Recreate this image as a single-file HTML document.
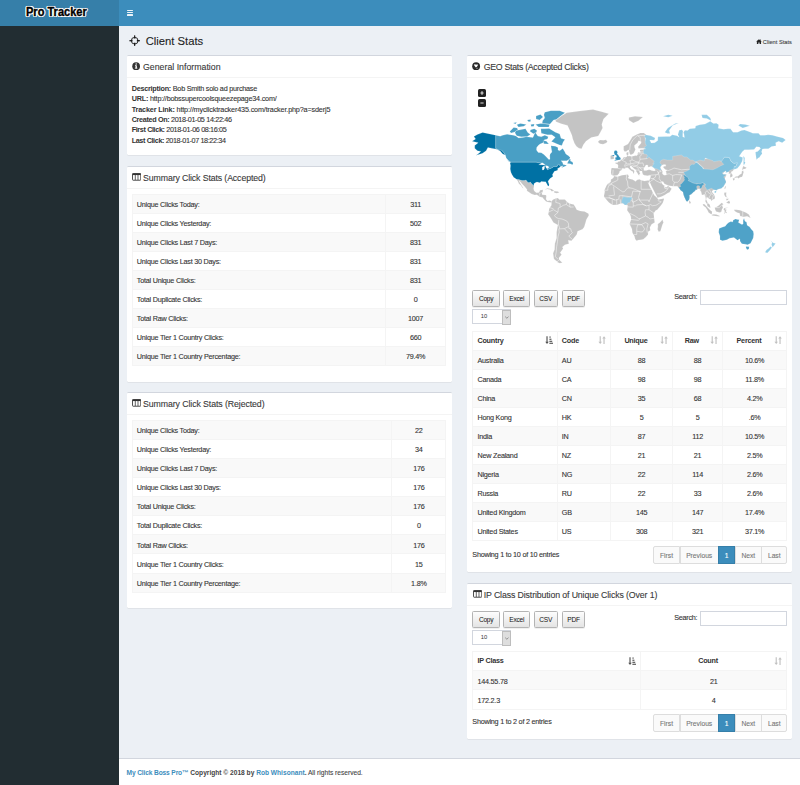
<!DOCTYPE html>
<html><head><meta charset="utf-8"><title>Client Stats</title>
<style>
html,body{margin:0;padding:0;}
body{width:800px;height:785px;overflow:hidden;background:#ecf0f5;}
#pg{zoom:0.5165;position:relative;width:1549px;height:1520px;overflow:hidden;background:#ecf0f5;font-family:"Liberation Sans",sans-serif;color:#333;font-size:13px;line-height:20px;}
.abs{position:absolute;}
.hdr{left:0;top:0;width:1549px;height:50px;background:#3c8dbc;}
.logo{left:0;top:0;width:230px;height:50px;background:#367fa9;}
.logo span{position:absolute;left:50px;top:10px;font-weight:bold;font-size:23.5px;line-height:30px;color:#000;-webkit-text-stroke:0.7px #000;transform:scaleX(0.91);transform-origin:0 0;white-space:nowrap;
 text-shadow:-2px -2px 0 #fff,2px -2px 0 #fff,-2px 2px 0 #fff,2px 2px 0 #fff,0 -2.6px 0 #fff,0 2.6px 0 #fff,-2.6px 0 0 #fff,2.6px 0 0 #fff,0 0 3px #fff;}
.side{left:0;top:50px;width:230px;height:1470px;background:#222d32;}
.ham{left:245px;top:19px;width:12.5px;height:11.5px;}
.ham i{position:absolute;left:0;width:12.5px;height:2.2px;background:rgba(255,255,255,0.9);border-radius:1px;}
.ch-title{left:282px;top:66px;font-size:21.8px;line-height:30px;color:#222;white-space:nowrap;}
.ch-icon{left:249px;top:67px;width:22px;height:22px;}
.bc{left:1463px;top:75px;font-size:11px;line-height:15px;color:#444;white-space:nowrap;}
.box{background:#fff;border-top:3px solid #d2d6de;border-radius:3px;box-shadow:0 1px 1px rgba(0,0,0,.1);box-sizing:border-box;}
.bh{position:absolute;left:0;top:0;right:0;height:41px;border-bottom:1px solid #f4f4f4;}
.bh .t{position:absolute;left:32px;top:9.5px;font-size:17px;line-height:24px;color:#383838;white-space:nowrap;}
.bh svg{position:absolute;left:10px;top:12px;}
.bb{position:absolute;left:10px;right:10px;}
table.tb{border-collapse:collapse;width:609.5px;table-layout:fixed;}
table.tb td,table.tb th{border:1px solid #f4f4f4;padding:7.5px 8px;line-height:20px;height:20px;font-size:14px;letter-spacing:-0.45px;white-space:nowrap;overflow:hidden;}
table.tb td{padding:10px 8px 5px 8px;}
table.tb tr.o td{background:#f9f9f9;}
table.tb th{font-weight:bold;text-align:left;position:relative;}
table.tb .c,.c{text-align:center;}
.btn{position:absolute;top:-0.5px;height:33px;box-sizing:border-box;border:1px solid #b4b4b4;border-radius:3px;background:linear-gradient(#fdfdfd,#e4e4e4);font-size:12.8px;letter-spacing:-0.45px;line-height:31px;text-align:center;color:#111;box-shadow:0 1px 1px rgba(0,0,0,.12);}
.sel{position:absolute;left:0;width:75px;height:29px;box-sizing:border-box;border:1px solid #d2d6de;background:#fff;font-size:11.2px;line-height:27px;}
.sel span{position:absolute;left:14.5px;top:0.5px;}
.sel b{position:absolute;right:-1px;top:-1px;width:17px;height:29px;box-sizing:border-box;background:#dedede;border:1px solid #bdbdbd;}
.srch{position:absolute;font-size:14px;letter-spacing:-0.5px;line-height:20px;color:#333;}
.inp{position:absolute;width:168.5px;height:30px;box-sizing:border-box;border:1px solid #d2d6de;background:#fff;}
.info{position:absolute;left:0;font-size:14px;letter-spacing:-0.45px;line-height:20px;color:#333;white-space:nowrap;}
.pag{position:absolute;height:34px;box-sizing:border-box;}
.pag a{position:absolute;top:0;height:34px;box-sizing:border-box;border:1px solid #ddd;background:#fafafa;color:#777;font-size:13px;line-height:34px;text-align:center;}
.pag a:first-child{border-radius:4px 0 0 4px;}
.pag a:last-child{border-radius:0 4px 4px 0;}
.pag a.act{background:#3c8dbc;border-color:#367fa9;color:#fff;z-index:2;}
.sico{position:absolute;top:11px;}
.foot{left:230px;top:1467.5px;width:1319px;height:53px;background:#fff;border-top:1px solid #d2d6de;box-sizing:border-box;}
.foot .ft{position:absolute;left:15px;top:18px;font-size:12.8px;line-height:20px;color:#444;white-space:nowrap;}
.foot a{color:#3c8dbc;font-weight:bold;text-decoration:none;}
.gi{line-height:20px;font-size:14px;letter-spacing:-0.45px;}
.gi b{font-weight:bold;-webkit-text-stroke:0;}
table.tb td,.gi,.info,.srch,.pag a,.bc,.ch-title,.bh .t,.foot .ft{-webkit-text-stroke:0.2px currentColor;}
.foot b,.foot a{-webkit-text-stroke:0;}
</style></head>
<body><div id="pg">
<div class="abs hdr"></div>
<div class="abs logo"><span>Pro Tracker</span></div>
<div class="abs ham"><i style="top:0"></i><i style="top:4.5px"></i><i style="top:9px"></i></div>
<div class="abs side"></div>

<svg class="abs ch-icon" viewBox="0 0 22 22"><circle cx="11" cy="11" r="6.5" fill="none" stroke="#1a1a1a" stroke-width="1.7"/><path d="M9.4 6.8 L10.1 0.6 L11.9 0.6 L12.6 6.8 Z M9.4 15.2 L10.1 21.4 L11.9 21.4 L12.6 15.2 Z M6.8 9.4 L0.6 10.1 L0.6 11.9 L6.8 12.6 Z M15.2 9.4 L21.4 10.1 L21.4 11.9 L15.2 12.6 Z" fill="#1a1a1a"/></svg>
<div class="abs ch-title">Client Stats</div>
<div class="abs bc"><svg width="11.5" height="10" viewBox="0 0 11.5 10" style="vertical-align:-1px"><path d="M5.75 0.6 L11.3 5 L9.8 5 L9.8 9.8 L6.9 9.8 L6.9 6.6 L4.6 6.6 L4.6 9.8 L1.7 9.8 L1.7 5 L0.2 5 Z M8.2 0.8 H9.6 V3 L8.2 2 Z" fill="#262626"/></svg><span style="margin-left:2.5px">Client Stats</span></div>

<!-- Box 1 General Information -->
<div class="abs box" style="left:245px;top:107px;width:629.5px;height:194px;">
 <div class="bh"><svg width="16" height="16" viewBox="0 0 16 16"><circle cx="8" cy="8" r="7.5" fill="#333"/><rect x="6.8" y="6.5" width="2.6" height="6" fill="#fff"/><rect x="5.6" y="11.2" width="4.8" height="1.4" fill="#fff"/><rect x="5.8" y="6.5" width="2" height="1.3" fill="#fff"/><circle cx="8.1" cy="4" r="1.4" fill="#fff"/></svg><div class="t">General Information</div></div>
 <div class="bb gi" style="top:53.5px;">
  <div style="letter-spacing:-0.45px"><b>Description:</b> Bob Smith solo ad purchase</div>
  <div style="letter-spacing:-0.38px"><b>URL:</b> http://bobssupercoolsqueezepage34.com/</div>
  <div style="letter-spacing:-0.29px"><b>Tracker Link:</b> http://myclicktracker435.com/tracker.php?a=sderj5</div>
  <div style="letter-spacing:-0.65px"><b>Created On:</b> 2018-01-05 14:22:46</div>
  <div style="letter-spacing:-0.71px"><b>First Click:</b> 2018-01-06 08:16:05</div>
  <div style="letter-spacing:-0.73px"><b>Last Click:</b> 2018-01-07 18:22:34</div>
 </div>
</div>

<!-- Box 2 Summary Accepted -->
<div class="abs box" style="left:245px;top:321px;width:629.5px;height:418px;">
 <div class="bh"><svg width="18" height="15" viewBox="0 0 18 15" style="top:12.5px;left:10.5px"><rect x="1" y="1" width="16" height="13" rx="1.2" fill="none" stroke="#333" stroke-width="1.7"/><rect x="1" y="1" width="16" height="3" fill="#333"/><path d="M6.4 3.5V13.5M11.6 3.5V13.5" stroke="#333" stroke-width="1.5"/></svg><div class="t" style="letter-spacing:-0.24px">Summary Click Stats (Accepted)</div></div>
 <div class="bb" style="top:52.3px;">
  <table class="tb"><colgroup><col style="width:489.8px"><col></colgroup>
  <tr class="o"><td>Unique Clicks Today:</td><td class="c">311</td></tr>
  <tr><td>Unique Clicks Yesterday:</td><td class="c">502</td></tr>
  <tr class="o"><td>Unique Clicks Last 7 Days:</td><td class="c">831</td></tr>
  <tr><td>Unique Clicks Last 30 Days:</td><td class="c">831</td></tr>
  <tr class="o"><td>Total Unique Clicks:</td><td class="c">831</td></tr>
  <tr><td>Total Duplicate Clicks:</td><td class="c">0</td></tr>
  <tr class="o"><td>Total Raw Clicks:</td><td class="c">1007</td></tr>
  <tr><td>Unique Tier 1 Country Clicks:</td><td class="c">660</td></tr>
  <tr class="o"><td>Unique Tier 1 Country Percentage:</td><td class="c">79.4%</td></tr>
  </table>
 </div>
</div>

<!-- Box 3 Summary Rejected -->
<div class="abs box" style="left:245px;top:759px;width:629.5px;height:418px;">
 <div class="bh"><svg width="18" height="15" viewBox="0 0 18 15" style="top:12.5px;left:10.5px"><rect x="1" y="1" width="16" height="13" rx="1.2" fill="none" stroke="#333" stroke-width="1.7"/><rect x="1" y="1" width="16" height="3" fill="#333"/><path d="M6.4 3.5V13.5M11.6 3.5V13.5" stroke="#333" stroke-width="1.5"/></svg><div class="t" style="letter-spacing:-0.18px">Summary Click Stats (Rejected)</div></div>
 <div class="bb" style="top:52.3px;">
  <table class="tb"><colgroup><col style="width:502.6px"><col></colgroup>
  <tr class="o"><td>Unique Clicks Today:</td><td class="c">22</td></tr>
  <tr><td>Unique Clicks Yesterday:</td><td class="c">34</td></tr>
  <tr class="o"><td>Unique Clicks Last 7 Days:</td><td class="c">176</td></tr>
  <tr><td>Unique Clicks Last 30 Days:</td><td class="c">176</td></tr>
  <tr class="o"><td>Total Unique Clicks:</td><td class="c">176</td></tr>
  <tr><td>Total Duplicate Clicks:</td><td class="c">0</td></tr>
  <tr class="o"><td>Total Raw Clicks:</td><td class="c">176</td></tr>
  <tr><td>Unique Tier 1 Country Clicks:</td><td class="c">15</td></tr>
  <tr class="o"><td>Unique Tier 1 Country Percentage:</td><td class="c">1.8%</td></tr>
  </table>
 </div>
</div>

<!-- GEO box -->
<div class="abs box" style="left:904.5px;top:107px;width:629.5px;height:1001px;">
 <div class="bh"><svg width="16" height="16" viewBox="0 0 16 16" style="top:12px"><circle cx="8" cy="8" r="7.6" fill="#2a2a2a"/><path d="M3.6 5.4 L5.8 4.3 L7.9 5.5 L10.1 4.5 L11.6 5.6 L9.6 9.2 L7.6 10.6 L5.4 8.4 Z M8.8 11.6 L10.6 11 L10.4 12.9 L9 13.2 Z" fill="#fff"/></svg><div class="t" style="letter-spacing:-0.55px">GEO Stats (Accepted Clicks)</div></div>
 <div class="abs" style="left:10px;top:52px;width:609.5px;height:400px;"><svg class="abs" style="left:0;top:0" width="609.5" height="400" viewBox="0 0 609.5 400">
<path fill="#c4c4c4" stroke="#fff" stroke-width="0.6" stroke-opacity="0.5" d="M269.8 165.3L269.0 174.0L270.2 178.0L274.9 179.5L281.7 178.6L285.1 174.4L285.9 171.0L290.5 168.0L291.0 165.1L295.3 165.8L298.6 163.9L302.0 163.9L304.6 167.2L308.8 170.4L311.7 172.0L312.2 176.0L313.9 174.0L313.9 171.0L316.5 171.6L313.9 170.0L312.2 168.2L308.8 167.0L305.9 163.3L306.3 160.8L308.5 160.6L310.5 162.4L313.9 166.0L318.0 168.4L318.0 171.4L319.3 172.8L320.7 175.4L322.4 178.0L324.1 178.9L324.1 176.0L325.8 175.6L323.6 171.2L325.8 170.4L329.2 170.4L329.5 173.0L330.9 177.0L333.4 178.6L336.8 179.3L340.2 179.7L343.6 178.4L346.1 178.4L345.8 181.8L344.4 185.7L343.1 188.9L344.3 192.2L347.0 198.6L351.2 206.7L354.6 213.7L358.0 219.8L358.8 222.1L361.4 221.5L367.3 219.8L373.3 216.9L378.3 213.7L382.6 211.5L386.5 204.9L384.3 202.9L380.7 200.6L380.6 198.1L376.7 201.9L372.4 201.7L372.6 198.6L370.2 197.7L367.3 194.0L366.3 191.3L369.9 190.9L372.4 195.2L377.5 197.5L382.2 199.0L389.4 200.1L397.8 199.7L399.5 202.6L401.6 204.0L403.8 207.8L408.5 211.1L409.7 216.7L411.6 221.9L414.3 227.6L416.5 230.1L417.7 228.6L420.4 226.2L421.3 221.0L420.9 217.2L424.6 215.3L427.9 212.0L432.3 208.6L432.6 206.7L436.0 206.2L438.5 204.9L440.8 205.3L441.9 208.1L443.6 210.4L445.0 216.2L446.5 216.7L450.6 215.5L450.9 218.9L452.1 223.3L451.8 229.3L455.2 234.9L455.7 238.6L456.9 239.0L460.6 241.5L461.8 241.3L460.4 235.6L458.0 233.2L456.0 231.6L454.7 228.1L453.3 225.8L454.8 220.9L456.4 222.1L459.7 224.5L462.8 225.8L463.1 228.9L466.0 225.8L469.7 224.5L470.4 220.9L468.9 216.3L465.7 212.3L464.5 210.2L466.0 208.1L468.2 206.7L471.6 207.0L477.7 205.3L486.9 200.2L492.0 191.5L489.4 184.7L492.8 177.6L485.2 175.2L490.6 170.2L495.7 172.4L497.6 173.0L497.1 176.0L499.9 176.4L499.6 182.8L503.8 181.6L504.7 178.4L503.0 175.4L501.3 172.4L505.0 170.2L506.7 167.4L507.2 159.7L497.1 146.6L471.6 146.6L437.7 146.6L403.8 137.3L369.9 134.9L352.9 129.9L341.0 122.3L336.0 114.2L334.3 101.3L337.6 100.4L332.6 96.7L325.8 96.7L319.0 99.8L310.5 104.3L306.3 111.4L302.0 118.3L293.6 122.3L293.6 129.9L295.3 132.4L298.6 132.4L302.9 129.4L303.7 130.4L305.4 137.3L307.1 138.7L309.3 138.5L313.1 136.1L316.5 128.7L314.8 124.9L314.4 121.0L320.7 115.6L322.4 112.0L327.5 113.4L327.5 116.1L321.5 123.6L322.4 126.9L329.2 126.4L335.1 126.9L332.6 128.7L325.8 129.2L324.9 131.2L326.3 133.2L325.8 134.9L321.5 133.9L320.7 136.8L320.7 138.9L318.7 141.0L316.5 140.3L309.2 142.2L305.4 141.3L303.7 142.0L302.0 141.0L299.7 139.9L298.8 135.8L299.7 134.6L303.1 133.2L302.5 136.5L303.4 137.3L301.9 139.6L300.0 141.3L299.5 143.1L296.9 143.1L293.6 143.8L291.9 146.6L290.2 148.2L287.8 149.0L287.6 151.1L285.1 151.9L282.9 152.2L281.9 154.1L277.1 154.3L277.8 155.9L281.7 157.4L283.0 159.7L282.5 163.9L282.0 165.1L277.4 165.1L271.5 164.5Z"/>
<path fill="#c4c4c4" stroke="#fff" stroke-width="0.6" stroke-opacity="0.5" d="M161.3 73.2L173.2 63.7L183.3 57.7L208.8 54.4L234.2 51.4L251.2 55.6L264.7 59.7L254.6 69.5L251.2 80.3L252.9 87.1L247.8 96.7L244.4 102.8L230.8 105.7L220.6 112.8L215.6 119.6L212.2 127.4L207.1 126.1L202.0 122.3L198.6 117.0L195.2 108.6L193.5 101.3L190.1 93.6L185.0 82.1L171.5 78.6L163.0 75.0Z"/>
<path fill="#c4c4c4" stroke="#fff" stroke-width="0.6" stroke-opacity="0.5" d="M244.4 112.8L247.8 110.3L254.6 110.9L259.6 110.0L262.2 113.7L259.6 116.1L253.7 118.6L247.8 117.5L244.4 114.8Z"/>
<path fill="#c4c4c4" stroke="#fff" stroke-width="0.6" stroke-opacity="0.5" d="M303.7 71.4L312.2 77.5L322.4 73.2L330.9 65.7L315.6 64.5L303.7 66.8Z"/>
<path fill="#c4c4c4" stroke="#fff" stroke-width="0.6" stroke-opacity="0.5" d="M86.3 186.4L90.4 186.6L96.8 188.9L101.6 188.9L104.5 187.9L107.9 192.0L110.4 193.1L113.0 191.6L116.3 195.9L120.2 198.8L119.2 204.9L120.6 209.3L124.0 212.0L124.8 212.5L129.9 212.0L131.6 207.6L137.5 206.7L136.7 212.0L135.3 212.0L133.8 213.2L130.1 214.1L131.6 216.3L128.7 218.9L125.7 216.3L121.4 216.9L115.5 214.8L106.2 208.5L106.5 206.2L101.9 200.4L96.8 195.2L93.8 191.3L90.4 188.1L91.8 191.3L96.0 198.6L99.4 203.7L98.0 203.1L94.8 198.6L90.9 195.0L88.7 190.3Z"/>
<path fill="#c4c4c4" stroke="#fff" stroke-width="0.6" stroke-opacity="0.5" d="M128.7 218.9L131.6 216.3L130.1 214.1L133.8 213.2L135.3 212.0L135.9 216.3L142.6 216.7L144.0 218.1L143.3 225.0L146.0 228.4L150.3 227.4L154.0 228.9L153.0 231.5L149.6 231.0L146.9 230.5L143.5 229.3L139.6 225.8L136.7 221.5L130.8 220.0Z"/>
<path fill="#c4c4c4" stroke="#fff" stroke-width="0.6" stroke-opacity="0.5" d="M140.9 206.2L146.0 203.7L154.5 205.4L159.3 209.0L153.7 209.5L152.0 206.7L146.0 205.4Z"/>
<path fill="#c4c4c4" stroke="#fff" stroke-width="0.6" stroke-opacity="0.5" d="M158.9 209.7L161.6 209.5L166.4 209.9L169.1 211.8L163.8 213.4L158.9 212.2Z"/>
<path fill="#c4c4c4" stroke="#fff" stroke-width="0.6" stroke-opacity="0.5" d="M154.0 228.9L157.0 225.8L163.0 223.3L166.4 222.9L168.9 225.8L176.5 225.8L179.9 225.8L183.3 229.3L188.4 233.5L196.9 235.2L200.3 240.7L202.8 245.4L209.6 247.9L218.1 248.8L225.7 253.0L226.1 256.4L221.5 264.2L218.9 273.7L217.2 279.0L213.9 283.4L204.5 287.0L202.8 293.4L196.1 301.8L192.7 305.2L186.2 304.6L187.6 311.4L179.9 313.4L174.9 317.4L176.5 320.4L170.6 328.8L173.5 332.0L168.1 338.6L168.9 342.0L164.7 345.4L158.7 340.8L157.0 329.8L159.9 322.5L160.4 311.4L163.8 299.9L163.8 288.8L166.2 275.1L157.6 269.9L153.7 263.3L147.4 253.9L148.6 249.6L149.4 243.7L153.7 236.9L154.0 231.5L153.0 231.5Z"/>
<path fill="#c4c4c4" stroke="#fff" stroke-width="0.6" stroke-opacity="0.5" d="M168.9 342.2L174.9 347.8L169.8 349.0L164.7 346.6Z"/>
<path fill="#c4c4c4" stroke="#fff" stroke-width="0.6" stroke-opacity="0.5" d="M275.1 180.3L281.7 181.6L290.2 178.4L302.0 177.4L303.7 180.9L302.0 183.8L304.6 185.5L310.9 187.0L317.3 190.7L319.0 187.9L324.1 186.4L327.5 188.3L334.3 189.6L339.9 188.9L343.1 188.9L343.2 195.0L340.4 191.5L344.4 201.3L348.2 207.6L350.4 212.9L352.9 217.2L358.3 222.2L360.5 225.8L371.9 223.4L371.6 225.8L369.5 231.8L366.5 236.1L358.8 245.4L355.5 247.1L351.7 252.2L352.6 260.7L353.8 269.9L347.8 273.7L344.4 279.8L345.3 285.2L341.0 287.9L340.9 293.4L336.8 298.0L331.7 302.3L327.5 303.7L322.4 304.2L318.7 305.2L316.1 302.7L314.4 296.1L310.5 289.7L309.7 282.5L305.1 272.8L308.0 264.2L307.5 258.7L305.8 253.9L300.3 246.3L301.2 240.3L301.5 236.9L296.9 236.2L292.7 233.0L287.6 233.2L281.7 235.6L272.4 236.4L265.6 232.0L262.5 228.7L259.6 225.0L256.6 221.5L255.4 218.6L257.1 210.2L256.3 207.6L260.5 198.3L263.0 195.3L268.5 191.6L269.0 186.6L273.5 183.8Z"/>
<path fill="#c4c4c4" stroke="#fff" stroke-width="0.6" stroke-opacity="0.5" d="M368.7 264.2L370.7 270.2L369.0 273.7L367.3 279.0L364.8 287.0L361.4 287.9L359.2 283.4L360.0 278.1L359.7 272.8L363.4 270.7L366.1 267.6Z"/>
<path fill="#c4c4c4" stroke="#fff" stroke-width="0.6" stroke-opacity="0.5" d="M488.7 204.0L490.3 199.9L492.0 200.4L489.8 205.8Z"/>
<path fill="#c4c4c4" stroke="#fff" stroke-width="0.6" stroke-opacity="0.5" d="M420.4 227.0L423.8 231.0L422.8 233.2L420.7 233.4L420.2 230.1Z"/>
<path fill="#c4c4c4" stroke="#fff" stroke-width="0.6" stroke-opacity="0.5" d="M446.7 234.2L450.4 234.9L455.2 240.3L461.4 246.3L464.8 248.8L464.5 253.6L462.3 253.7L458.0 250.5L455.5 245.4L452.1 240.8L447.9 237.8Z"/>
<path fill="#c4c4c4" stroke="#fff" stroke-width="0.6" stroke-opacity="0.5" d="M463.5 255.3L468.2 253.9L473.3 254.7L479.2 256.8L479.2 258.5L471.6 257.6L464.8 256.4Z"/>
<path fill="#c4c4c4" stroke="#fff" stroke-width="0.6" stroke-opacity="0.5" d="M469.9 241.2L470.9 245.4L472.5 248.8L479.2 250.5L482.6 249.6L484.3 243.7L486.0 242.0L484.3 236.1L486.9 234.9L483.5 231.8L480.9 234.4L477.6 237.3L474.2 239.5L471.6 240.7Z"/>
<path fill="#c4c4c4" stroke="#fff" stroke-width="0.6" stroke-opacity="0.5" d="M487.7 253.0L489.4 247.9L486.9 244.6L488.6 242.0L496.7 241.2L490.3 242.9L491.1 245.4L493.7 245.4L491.1 247.9L493.7 251.3L492.0 252.2L489.4 249.6L489.1 253.0Z"/>
<path fill="#c4c4c4" stroke="#fff" stroke-width="0.6" stroke-opacity="0.5" d="M507.2 245.4L512.3 245.4L519.1 246.4L524.2 248.1L531.0 251.3L536.1 254.7L539.4 261.6L532.7 258.2L527.6 259.0L524.2 259.4L520.8 257.3L519.1 257.8L518.2 252.2L514.0 251.0L508.9 248.5Z"/>
<path fill="#c4c4c4" stroke="#fff" stroke-width="0.6" stroke-opacity="0.5" d="M488.6 212.0L492.5 212.0L492.0 216.3L492.8 219.8L495.4 221.5L490.3 220.2L489.4 218.1L488.2 215.5Z"/>
<path fill="#c4c4c4" stroke="#fff" stroke-width="0.6" stroke-opacity="0.5" d="M492.0 231.8L497.9 227.4L499.8 231.8L497.9 233.9L495.4 232.7Z"/>
<path fill="#c4c4c4" stroke="#fff" stroke-width="0.6" stroke-opacity="0.5" d="M492.0 224.1L497.1 224.1L495.4 226.7L492.8 227.6Z"/>
<path fill="#c4c4c4" stroke="#fff" stroke-width="0.6" stroke-opacity="0.5" d="M507.1 183.8L510.6 180.9L514.9 180.7L517.4 178.0L522.1 175.0L522.5 171.0L525.0 169.4L525.9 173.0L523.8 179.9L522.5 181.8L519.1 182.6L515.7 184.7L514.0 182.8L509.8 183.4Z"/>
<path fill="#c4c4c4" stroke="#fff" stroke-width="0.6" stroke-opacity="0.5" d="M504.7 184.7L508.1 183.8L508.9 186.2L506.4 189.4L505.5 187.5Z"/>
<path fill="#c4c4c4" stroke="#fff" stroke-width="0.6" stroke-opacity="0.5" d="M522.5 169.0L525.0 160.8L531.8 163.9L529.3 166.2L525.0 166.8Z"/>
<path fill="#c4c4c4" stroke="#fff" stroke-width="0.6" stroke-opacity="0.5" d="M274.9 146.6L274.6 142.4L272.5 139.2L270.7 139.6L268.1 141.5L268.1 147.5L271.5 147.7Z"/>
<path fill="#0071a4" stroke="#fff" stroke-width="0.6" stroke-opacity="0.5" d="M46.0 101.0L20.5 95.8L10.4 99.8L3.6 103.4L7.0 108.6L0.2 112.6L12.1 115.6L5.3 121.0L5.3 126.1L10.4 131.2L17.1 132.4L10.4 138.5L7.0 140.6L20.5 136.1L27.3 131.2L30.7 124.9L37.5 126.1L47.7 128.2L54.5 131.9L59.5 137.3L64.6 139.6L62.9 136.1L57.0 129.9L51.9 129.9L46.0 126.7Z"/>
<path fill="#499fc5" stroke="#fff" stroke-width="0.6" stroke-opacity="0.5" d="M46.0 101.0L46.0 126.7L51.9 129.9L57.0 129.9L62.9 136.1L64.6 139.6L66.3 145.4L71.4 151.1L75.6 153.3L124.0 153.3L134.2 155.4L141.8 158.6L145.2 161.2L145.2 168.0L151.1 166.0L155.4 163.9L158.7 161.8L164.7 161.8L167.7 156.7L170.1 160.3L171.5 161.8L176.5 160.1L173.2 163.9L181.6 160.8L183.3 159.3L176.5 157.6L175.2 153.3L172.3 150.6L183.3 150.6L188.4 147.7L190.1 144.3L186.7 140.8L181.6 137.3L179.9 133.6L175.7 126.7L169.8 131.2L166.4 129.9L166.4 124.9L161.3 122.3L152.8 121.5L153.7 127.4L154.8 133.6L151.3 137.3L150.6 140.8L151.1 147.7L148.6 148.2L145.5 144.7L139.2 138.5L134.2 135.1L128.2 134.4L124.8 129.9L125.2 124.9L128.2 121.0L131.6 118.3L137.5 115.6L140.1 110.0L146.0 108.6L147.7 104.3L140.9 101.3L134.2 104.3L127.4 102.8L122.3 95.2L118.0 105.7L105.3 104.3L98.5 105.7L90.1 106.3L85.0 102.8L79.9 101.3L68.0 99.2L59.5 101.3L54.5 103.1Z"/>
<path fill="#499fc5" stroke="#fff" stroke-width="0.6" stroke-opacity="0.5" d="M149.4 88.1L161.3 95.2L169.8 98.9L172.3 107.2L179.9 109.2L176.5 114.2L174.0 121.0L169.8 120.2L163.8 117.5L159.6 115.6L153.7 113.4L159.6 107.2L161.3 105.1L154.5 100.4L146.0 100.4L134.2 97.3L133.3 88.8L140.9 88.8Z"/>
<path fill="#499fc5" stroke="#fff" stroke-width="0.6" stroke-opacity="0.5" d="M83.3 95.2L85.8 92.0L93.5 90.7L103.6 88.8L107.9 95.8L113.0 99.8L107.0 103.4L95.2 104.3L86.7 102.2L84.1 98.3Z"/>
<path fill="#499fc5" stroke="#fff" stroke-width="0.6" stroke-opacity="0.5" d="M73.1 93.9L80.7 86.1L86.7 87.1L89.2 89.4L82.4 94.8L75.6 97.0Z"/>
<path fill="#499fc5" stroke="#fff" stroke-width="0.6" stroke-opacity="0.5" d="M135.9 78.6L151.1 79.6L157.9 71.4L163.0 70.6L171.5 63.7L179.9 57.7L169.8 53.5L152.8 53.5L140.9 56.5L139.2 61.7L140.9 67.6L136.7 73.2Z"/>
<path fill="#499fc5" stroke="#fff" stroke-width="0.6" stroke-opacity="0.5" d="M129.1 85.1L148.6 85.4L150.3 80.3L133.3 78.2L123.1 80.3Z"/>
<path fill="#499fc5" stroke="#fff" stroke-width="0.6" stroke-opacity="0.5" d="M86.7 81.0L93.5 78.2L105.3 80.3L100.2 83.8L90.1 85.1Z"/>
<path fill="#499fc5" stroke="#fff" stroke-width="0.6" stroke-opacity="0.5" d="M79.9 77.5L86.7 76.1L84.1 79.6Z"/>
<path fill="#499fc5" stroke="#fff" stroke-width="0.6" stroke-opacity="0.5" d="M107.0 71.4L113.8 70.6L113.0 75.0L108.7 74.7Z"/>
<path fill="#499fc5" stroke="#fff" stroke-width="0.6" stroke-opacity="0.5" d="M113.8 80.3L120.6 79.6L119.7 83.8L114.7 84.4Z"/>
<path fill="#499fc5" stroke="#fff" stroke-width="0.6" stroke-opacity="0.5" d="M124.0 63.7L132.5 60.9L137.5 65.7L130.8 71.4L124.0 69.5Z"/>
<path fill="#499fc5" stroke="#fff" stroke-width="0.6" stroke-opacity="0.5" d="M113.8 90.4L120.6 88.8L125.7 92.0L124.8 95.2L118.9 98.3L112.1 93.6Z"/>
<path fill="#499fc5" stroke="#fff" stroke-width="0.6" stroke-opacity="0.5" d="M139.2 117.5L148.6 118.3L144.3 112.8L137.5 111.4Z"/>
<path fill="#499fc5" stroke="#fff" stroke-width="0.6" stroke-opacity="0.5" d="M184.3 156.1L188.4 147.7L191.0 147.5L190.5 151.1L194.7 152.8L195.7 156.3L194.4 158.2L190.1 156.5Z"/>
<path fill="#499fc5" stroke="#fff" stroke-width="0.6" stroke-opacity="0.5" d="M67.2 149.3L74.8 152.8L75.8 154.6L71.4 152.2Z"/>
<path fill="#0071a4" stroke="#fff" stroke-width="0.6" stroke-opacity="0.5" d="M75.6 153.3L73.6 154.8L74.6 159.7L74.0 166.4L75.3 173.0L77.3 177.0L80.6 182.6L86.3 186.4L90.4 186.6L96.8 188.9L101.6 188.9L104.5 187.9L107.9 192.0L110.4 193.1L113.0 191.6L116.3 195.9L120.2 198.8L119.7 195.3L124.0 192.2L126.0 191.8L131.6 192.9L133.8 190.7L140.1 191.3L142.6 191.3L144.8 195.0L146.4 198.6L148.7 200.1L149.4 197.2L147.2 190.3L151.1 184.7L156.7 180.9L155.7 177.0L159.6 171.0L163.0 170.0L166.4 168.6L165.4 166.0L171.5 162.2L170.1 160.3L167.7 156.7L164.7 161.8L158.7 161.8L155.4 163.9L151.1 166.0L145.2 168.0L145.2 161.2L141.8 158.6L134.2 155.4L124.0 153.3Z"/>
<path fill="#92cce6" stroke="#fff" stroke-width="0.6" stroke-opacity="0.5" d="M289.7 233.0L289.7 228.1L291.2 223.8L292.2 220.7L295.3 220.3L298.5 221.0L301.7 221.5L305.8 221.2L308.1 220.3L309.7 222.4L309.8 224.1L307.6 226.4L306.8 228.9L305.1 231.8L302.0 231.8L300.2 235.6L296.9 236.2L294.4 235.4L292.7 233.0Z"/>
<path fill="#92cce6" stroke="#fff" stroke-width="0.6" stroke-opacity="0.5" d="M336.0 100.4L346.1 102.2L354.6 106.6L352.9 110.9L344.1 110.3L347.0 116.1L353.8 115.6L359.7 111.4L360.0 104.3L375.0 103.4L383.4 103.4L387.7 100.4L397.0 101.9L401.2 104.8L398.7 99.8L401.2 91.7L406.3 90.7L408.5 93.0L408.0 98.3L408.0 104.3L411.4 105.7L410.6 99.8L409.4 95.2L412.3 91.4L417.3 92.0L421.6 88.4L432.3 87.4L433.0 83.4L441.1 80.7L451.3 79.6L461.4 74.3L467.4 78.6L473.3 77.9L477.6 80.7L476.7 87.4L486.9 89.7L495.4 88.8L500.4 88.8L505.5 95.2L514.0 95.2L521.6 92.0L527.6 91.0L539.4 95.2L543.7 97.3L554.7 97.3L558.1 101.3L566.6 101.3L573.4 100.4L581.8 101.3L590.3 103.4L602.2 106.3L607.3 110.3L600.5 115.6L593.7 112.8L587.8 115.6L588.6 121.5L580.1 123.1L573.9 127.4L566.6 127.4L562.3 127.7L560.6 132.9L561.8 136.8L559.5 139.6L556.4 144.3L553.9 145.4L550.8 148.8L549.3 138.5L548.8 133.6L553.0 132.4L558.9 126.7L556.4 124.1L550.5 123.3L546.2 128.7L536.1 129.2L527.6 129.2L523.3 132.9L517.4 142.0L524.2 144.3L523.3 151.1L519.1 158.6L514.0 164.9L510.6 166.4L508.1 166.8L506.7 167.4L506.7 166.0L507.7 161.8L510.6 161.8L513.7 154.6L507.2 155.9L501.3 151.5L497.9 144.3L488.6 143.8L483.5 151.7L481.8 151.1L478.4 150.4L468.2 152.4L466.5 150.4L451.3 145.4L449.6 151.1L441.1 149.3L434.3 152.2L432.6 152.8L427.5 149.3L423.3 149.3L415.7 143.1L410.6 143.1L405.5 139.2L388.5 142.0L388.5 149.3L378.3 149.3L370.7 147.7L365.6 150.2L363.9 154.6L365.1 156.1L368.2 158.9L365.6 160.6L364.8 163.9L366.5 168.0L363.1 169.0L359.0 166.6L352.9 164.9L348.7 162.4L350.4 158.6L352.6 155.9L349.9 156.5L352.9 152.2L349.5 148.8L345.3 145.9L342.7 143.1L339.0 146.3L337.6 143.1L340.2 142.0L338.3 138.5L332.6 136.8L331.7 133.6L332.2 128.7L336.8 127.4L332.6 125.9L335.1 123.6L337.6 121.0L336.0 118.3L335.1 114.2L336.0 106.6L333.4 103.7Z"/>
<path fill="#92cce6" stroke="#fff" stroke-width="0.6" stroke-opacity="0.5" d="M373.3 95.2L378.3 97.6L383.4 98.0L381.7 92.0L388.5 82.1L400.4 77.5L393.6 78.6L379.2 87.1L375.8 92.0Z"/>
<path fill="#92cce6" stroke="#fff" stroke-width="0.6" stroke-opacity="0.5" d="M446.2 67.6L454.7 68.7L463.1 73.2L461.4 67.6L454.7 61.7L444.5 61.7Z"/>
<path fill="#92cce6" stroke="#fff" stroke-width="0.6" stroke-opacity="0.5" d="M515.7 82.1L524.2 87.1L537.8 82.7L529.3 80.3L519.1 79.6Z"/>
<path fill="#92cce6" stroke="#fff" stroke-width="0.6" stroke-opacity="0.5" d="M525.9 141.5L528.1 145.4L527.6 152.6L529.3 153.7L526.2 159.7L525.5 155.0L526.0 148.8L525.4 143.1Z"/>
<path fill="#92cce6" stroke="#fff" stroke-width="0.6" stroke-opacity="0.5" d="M369.9 64.5L380.0 61.7L388.5 63.3L380.0 66.1Z"/>
<path fill="#7ec0dd" stroke="#fff" stroke-width="0.6" stroke-opacity="0.5" d="M409.7 173.0L412.3 177.6L414.0 180.3L418.2 183.2L419.9 186.6L418.7 189.4L422.4 190.9L427.5 193.7L434.3 195.2L436.0 194.6L441.1 195.3L447.0 193.1L450.1 194.6L452.3 195.9L450.9 200.8L452.6 202.2L453.8 205.6L457.4 207.2L459.7 205.1L464.0 204.0L468.2 206.7L471.6 207.0L472.5 208.8L474.3 206.5L477.7 205.3L482.6 204.2L486.9 200.2L489.4 195.9L492.0 191.5L490.3 187.9L489.4 184.7L487.2 182.2L488.9 180.1L492.8 177.6L491.1 177.0L486.5 177.2L485.2 175.2L484.5 174.0L487.7 172.2L490.6 170.2L492.3 171.2L490.9 174.0L495.7 172.4L499.6 169.0L504.7 167.2L506.7 167.4L506.7 166.0L507.7 161.8L510.6 161.8L513.7 154.6L507.2 155.9L501.3 151.5L497.9 144.3L488.6 143.8L483.5 151.7L481.8 151.1L487.7 157.6L480.9 160.8L474.2 164.7L466.5 168.0L456.4 166.8L448.4 166.6L446.7 163.3L439.1 157.8L438.2 155.4L434.0 152.8L430.2 157.6L425.8 157.2L421.1 161.4L421.6 167.4L414.8 171.0Z"/>
<path fill="#7ec0dd" stroke="#fff" stroke-width="0.6" stroke-opacity="0.5" d="M469.2 210.8L471.6 209.3L473.3 210.0L472.0 212.5L469.4 212.0Z"/>
<path fill="#50a3c8" stroke="#fff" stroke-width="0.6" stroke-opacity="0.5" d="M400.7 202.8L403.8 207.8L408.5 211.1L409.7 216.7L411.6 221.9L414.3 227.6L416.5 230.1L417.7 228.6L420.4 226.2L421.3 221.0L420.9 217.2L424.6 215.3L427.9 212.0L432.3 208.6L432.6 206.7L435.8 206.5L435.3 203.1L434.8 200.6L437.4 198.6L441.1 199.9L440.2 202.2L441.4 202.9L442.1 205.8L443.3 203.1L444.8 202.6L446.2 198.6L449.6 195.9L447.0 193.1L441.1 195.3L437.4 194.4L435.7 196.2L434.5 195.2L427.5 193.7L422.4 190.9L418.7 189.4L419.9 186.6L418.2 183.2L414.0 180.3L410.6 178.0L408.9 179.3L411.4 182.8L410.6 185.7L411.9 187.2L409.7 190.3L405.5 195.0L403.8 195.9L402.9 197.7L404.6 199.9L401.7 201.7Z"/>
<path fill="#4fa2c8" stroke="#fff" stroke-width="0.6" stroke-opacity="0.5" d="M478.4 281.6L477.6 288.8L480.1 296.1L480.1 303.7L485.2 305.6L493.7 303.3L498.7 300.4L507.2 298.9L514.0 304.6L518.6 301.8L519.1 306.5L522.5 311.4L529.3 312.0L533.5 313.4L539.4 310.4L544.5 299.9L545.4 292.4L544.5 287.0L540.3 282.5L537.8 279.0L532.7 275.4L531.5 269.3L528.4 267.6L526.7 261.9L525.0 265.9L525.0 272.8L522.5 274.0L515.7 270.2L517.4 264.7L514.0 264.2L509.9 263.3L505.5 265.5L504.7 269.3L501.3 268.1L497.1 270.2L493.7 272.8L490.3 277.2L484.3 279.5Z"/>
<path fill="#4fa2c8" stroke="#fff" stroke-width="0.6" stroke-opacity="0.5" d="M530.3 316.8L536.6 317.2L536.1 321.4L532.7 322.7L530.6 319.4Z"/>
<path fill="#94cee7" stroke="#fff" stroke-width="0.6" stroke-opacity="0.5" d="M577.9 304.6L582.7 309.4L587.8 310.8L585.2 314.0L581.8 318.6L581.0 315.0L579.8 313.8L581.0 308.9Z"/>
<path fill="#94cee7" stroke="#fff" stroke-width="0.6" stroke-opacity="0.5" d="M577.6 316.4L580.7 317.8L578.8 321.4L575.1 325.6L571.7 329.0L567.4 327.7L570.0 323.5L575.1 319.4Z"/>
<path fill="#3290bb" stroke="#fff" stroke-width="0.6" stroke-opacity="0.5" d="M275.4 150.8L278.3 150.2L283.4 149.3L287.5 148.4L288.0 145.0L285.6 143.4L284.2 140.8L282.4 138.2L280.8 137.0L282.0 133.4L279.5 130.9L276.6 130.9L274.9 133.6L275.6 137.3L276.6 139.6L279.1 140.1L279.7 142.0L280.2 143.6L277.4 143.8L278.0 145.9L276.3 147.0L279.7 147.9L277.4 148.8Z"/>
<path fill="#3290bb" stroke="#fff" stroke-width="0.6" stroke-opacity="0.5" d="M274.9 142.0L275.8 140.6L274.6 139.2L272.5 139.2L271.2 140.8L273.2 141.5Z"/>
<path fill="none" stroke="#fff" stroke-width="1.1" stroke-opacity="0.85" stroke-linejoin="round" d="M282.2 181.8L282.5 187.5L279.0 189.8L270.3 193.7 M270.3 193.7L270.3 196.2L276.9 200.4L286.8 207.6L291.9 210.8L295.3 210.2L301.2 203.1L305.4 203.1 M263.0 195.5L270.3 195.5 M256.3 207.6L263.0 207.6L263.0 204.0L264.7 198.6L270.3 196.2 M264.7 218.1L265.6 218.4L275.8 217.2L275.8 215.5L274.1 200.4 M265.6 222.4L270.7 224.1L278.3 226.7L284.2 225.0L285.1 218.3L291.9 218.1L291.9 219.8 M299.5 178.0L298.6 185.7L301.2 191.3L302.0 200.4L305.4 203.1 M327.5 188.3L327.5 205.8L347.8 205.8 M305.4 203.1L310.5 204.0L325.8 210.2L325.8 209.3L322.4 221.5L325.8 228.4 M291.9 218.1L308.8 220.7L311.4 209.3L325.6 210.2 M309.7 222.4L312.2 231.8L312.2 240.3L305.4 240.0L301.7 239.8 M308.8 226.7L311.4 231.0L317.3 228.4L322.4 225.0L325.8 228.4L331.7 235.2L337.6 237.8L342.7 236.9L345.3 235.2L349.5 237.6L354.6 236.9L356.3 236.9L366.5 230.1L359.7 227.6 M325.8 226.7L327.5 226.7L341.9 226.7L342.7 230.1L346.1 222.4L347.8 218.9L350.4 212.9 M312.2 237.8L316.5 237.8L319.0 236.1L330.9 235.2L337.6 237.8 M305.4 252.2L315.6 257.3L322.4 262.4L325.8 262.4L336.0 257.3L335.1 250.5L336.0 245.4L337.6 245.4L342.7 245.4L342.7 236.9 M342.7 245.4L352.1 251.5 M336.0 257.3L341.0 259.9L344.4 263.3L353.8 261.6 M305.1 272.8L325.8 273.7L327.5 274.2L336.0 270.2L341.0 272.8L338.5 282.5L339.3 289.7 M313.9 293.4L319.0 293.4L319.0 281.6L320.7 274.6L329.2 274.6L334.3 282.5L330.9 287.9L327.5 288.4L319.0 287.0 M308.0 264.2L322.4 265.9L325.8 262.4 M271.5 226.7L271.5 236.1 M280.0 235.2L280.3 225.0 M286.8 225.0L287.6 233.2 M276.6 226.7L264.7 221.5 M265.6 222.4L256.3 222.4 M159.8 256.3L162.1 259.9L167.2 262.4L174.3 263.3L183.3 267.1L186.7 271.6L187.6 281.6L191.0 282.1L192.7 287.9L194.4 289.7L187.4 296.5L194.5 303.1 M159.8 256.3L166.4 250.5L167.2 242.0L171.5 240.3L176.5 236.9L182.5 235.2L190.1 240.3L196.9 240.0 M148.9 249.6L157.9 245.4L166.4 250.5 M151.1 241.5L157.9 243.7 M163.0 223.3L162.1 231.1L170.6 233.5L170.6 240.3 M182.5 235.2L184.2 230.1 M188.4 233.5L190.1 240.3 M168.1 283.0L169.8 280.7L167.2 273.7L168.1 265.0 M168.1 283.0L168.9 288.8L166.4 298.0L165.5 307.5L163.8 317.4L163.0 327.7L161.3 336.4L166.4 340.8 M178.9 282.0L186.7 278.1 M178.9 282.0L186.7 290.6 M168.9 282.5L178.9 282.0 M166.2 275.1L167.2 273.7 M282.0 165.1L290.5 167.0 M273.2 168.0L272.5 177.6 M289.3 148.8L295.3 152.2L298.6 153.3L297.8 156.3L295.3 159.1L296.9 163.9 M309.2 142.2L310.0 149.0L305.4 150.4L307.1 153.7L307.1 156.5L301.2 156.5L297.8 156.3 M307.1 156.5L313.9 155.0L323.2 154.3 M310.0 149.0L313.9 150.4L317.3 152.2L323.2 153.3 M324.9 142.0L325.4 148.8L323.2 153.3L323.7 155.4L330.9 154.8L332.6 160.8 M320.7 137.3L332.6 136.8 M324.9 142.0L329.2 138.5 M325.4 147.7L339.3 146.3 M325.8 133.6L331.7 133.6 M319.8 159.7L323.2 163.9L333.4 164.3 M312.2 158.6L317.3 159.7L319.8 159.7L323.2 154.3 M308.3 160.8L312.2 158.6 M311.4 161.4L317.3 161.8L320.7 163.9L324.1 169.4L318.1 168.0 M324.1 163.9L330.0 168.4 M296.9 159.9L302.9 158.6L308.3 158.6 M291.0 148.2L295.3 147.0L296.9 143.6 M305.4 129.9L306.3 119.6L311.4 110.0L319.0 102.8L320.7 101.3 M325.8 112.0L325.8 105.7L320.7 102.2L334.3 101.3 M346.1 178.4L356.3 177.6L360.5 177.0L360.5 173.0L358.0 169.6 M345.8 185.1L350.9 184.9L356.3 189.4L363.9 193.1L366.5 191.3 M344.4 192.2L347.8 188.5L351.2 187.0L350.9 184.9 M356.3 177.6L354.6 182.8L350.9 184.9 M358.0 214.6L364.8 214.6L373.3 211.1L379.2 204.9L380.0 201.3 M363.9 193.1L365.6 194.0 M372.4 201.7L373.3 204.0L379.2 204.9 M360.5 173.0L363.1 181.8L362.2 184.7L366.5 191.3 M388.5 178.9L388.5 188.5L391.9 192.2L389.7 200.4 M406.3 178.0L403.8 183.8L402.1 188.5L397.8 192.2L391.9 192.2 M375.0 168.0L380.0 169.6L386.8 167.0L391.1 164.7L397.0 166.0L405.5 168.0L420.7 167.0 M376.5 177.0L381.7 175.6L388.5 178.9L394.5 177.4L398.7 177.4L406.3 178.0 M399.5 173.0L409.7 173.0 M363.1 169.0L366.5 171.0L360.5 173.0 M452.1 226.7L453.0 216.3L451.3 212.0L455.5 208.5 M455.5 208.5L458.0 212.9L463.1 215.5L459.7 219.8L458.9 223.3 M458.0 205.1L461.4 209.3L463.1 212.9L467.4 218.1L464.8 225.0 M441.6 207.6L442.3 204.9 M455.0 232.7L458.0 233.5 M470.9 240.7L478.4 241.5L483.5 236.6 M524.2 248.1L524.2 259.4 M497.1 176.0L503.0 175.4 M432.6 152.8L438.2 155.4L446.7 163.3L448.4 166.6"/>
<path fill="#ffffff" stroke="#fff" stroke-width="0.6" stroke-opacity="0.5" d="M332.6 169.4L332.6 164.9L335.3 161.4L336.8 158.6L339.0 158.6L341.0 159.9L340.2 161.2L342.1 162.9L345.3 161.8L347.1 161.0L349.9 163.1L352.6 165.1L355.6 168.8L352.9 170.2L347.8 169.6L344.4 168.0L341.4 168.2L337.6 169.6L334.4 169.6Z"/>
<path fill="#ffffff" stroke="#fff" stroke-width="0.6" stroke-opacity="0.5" d="M364.8 163.9L367.3 168.4L369.0 171.4L368.5 175.0L369.9 177.4L372.4 178.4L376.5 178.0L376.3 174.0L375.0 171.0L377.8 170.0L375.0 168.0L372.1 165.6L370.2 162.9L371.6 161.2L375.0 161.2L375.3 158.4L371.6 157.6L368.5 158.6L366.5 160.8Z"/>
<path fill="#ffffff" stroke="#fff" stroke-width="0.6" stroke-opacity="0.5" d="M129.1 158.2L135.9 154.3L141.3 157.8L138.4 158.6L132.5 158.4Z"/>
<path fill="#ffffff" stroke="#fff" stroke-width="0.6" stroke-opacity="0.5" d="M136.2 168.6L135.9 162.9L140.9 159.7L140.1 166.0L138.4 168.4Z"/>
<path fill="#ffffff" stroke="#fff" stroke-width="0.6" stroke-opacity="0.5" d="M141.8 160.1L146.9 160.8L149.4 162.9L145.2 166.0L143.5 163.9Z"/>
</svg>
  <div class="abs" style="left:11px;top:10.5px;width:15.5px;height:15.5px;background:#222;border-radius:3px;"><svg width="15.5" height="15.5" viewBox="0 0 16 16" class="abs" style="left:0;top:0"><path d="M4.8 8H11.2M8 4.2V11.8" stroke="#fff" stroke-width="1.7"/></svg></div>
  <div class="abs" style="left:11px;top:30.5px;width:15.5px;height:15.5px;background:#222;border-radius:3px;"><svg width="15.5" height="15.5" viewBox="0 0 16 16" class="abs" style="left:0;top:0"><path d="M4.8 8H11.2" stroke="#fff" stroke-width="1.7"/></svg></div>
 </div>
 <div class="abs" style="left:10px;top:452.5px;width:609.5px;height:80px;">
  <div class="btn" style="left:0;width:53.5px;">Copy</div>
  <div class="btn" style="left:60px;width:52px;">Excel</div>
  <div class="btn" style="left:119px;width:46px;">CSV</div>
  <div class="btn" style="left:173px;width:46px;">PDF</div>
  <div class="sel" style="top:37px;"><span>10</span><b><svg width="15" height="27" viewBox="0 0 15 27" style="position:absolute;left:0;top:0"><path d="M4.3 11L7.5 14L10.7 11" fill="none" stroke="#555" stroke-width="1.1"/></svg></b></div>
  <div class="srch" style="left:391px;top:4px;">Search:</div>
  <div class="inp" style="left:441px;top:0;"></div>
 </div>
 <div class="bb" style="top:531.3px;">
  <table class="tb"><colgroup><col style="width:163.4px"><col style="width:103.4px"><col style="width:120px"><col style="width:97px"><col></colgroup>
  <tr><th style="padding-right:30px">Country<svg class="sico" width="16" height="16" viewBox="0 0 16 16" style="right:7px;top:8.5px"><g fill="#333" opacity="0.85"><path d="M2.8 0.5h2.2v10.5h2.3l-3.4 4.5-3.4-4.5h2.3z"/><rect x="8.5" y="1" width="2.6" height="2.2"/><rect x="8.5" y="5.2" width="4" height="2.2"/><rect x="8.5" y="9.2" width="5.5" height="2.2"/><rect x="8.5" y="13" width="7" height="2.2"/></g></svg></th><th>Code<svg class="sico" width="16" height="16" viewBox="0 0 16 16" style="right:7px;top:8.5px"><g fill="#333" opacity="0.3"><path d="M3.2 0.5h2.2v10.5h2.3l-3.4 4.5-3.4-4.5h2.3z"/><path d="M10.6 15.5h2.2V5h2.3l-3.4-4.5L8.3 5h2.3z"/></g></svg></th><th class="c" style="padding-right:30px">Unique<svg class="sico" width="16" height="16" viewBox="0 0 16 16" style="right:7px;top:8.5px"><g fill="#333" opacity="0.3"><path d="M3.2 0.5h2.2v10.5h2.3l-3.4 4.5-3.4-4.5h2.3z"/><path d="M10.6 15.5h2.2V5h2.3l-3.4-4.5L8.3 5h2.3z"/></g></svg></th><th class="c" style="padding-right:30px">Raw<svg class="sico" width="16" height="16" viewBox="0 0 16 16" style="right:7px;top:8.5px"><g fill="#333" opacity="0.3"><path d="M3.2 0.5h2.2v10.5h2.3l-3.4 4.5-3.4-4.5h2.3z"/><path d="M10.6 15.5h2.2V5h2.3l-3.4-4.5L8.3 5h2.3z"/></g></svg></th><th class="c" style="padding-right:30px">Percent<svg class="sico" width="16" height="16" viewBox="0 0 16 16" style="right:7px;top:8.5px"><g fill="#333" opacity="0.3"><path d="M3.2 0.5h2.2v10.5h2.3l-3.4 4.5-3.4-4.5h2.3z"/><path d="M10.6 15.5h2.2V5h2.3l-3.4-4.5L8.3 5h2.3z"/></g></svg></th></tr>
  <tr class="o"><td>Australia</td><td>AU</td><td class="c">88</td><td class="c">88</td><td class="c">10.6%</td></tr>
  <tr><td>Canada</td><td>CA</td><td class="c">98</td><td class="c">98</td><td class="c">11.8%</td></tr>
  <tr class="o"><td>China</td><td>CN</td><td class="c">35</td><td class="c">68</td><td class="c">4.2%</td></tr>
  <tr><td>Hong Kong</td><td>HK</td><td class="c">5</td><td class="c">5</td><td class="c">.6%</td></tr>
  <tr class="o"><td>India</td><td>IN</td><td class="c">87</td><td class="c">112</td><td class="c">10.5%</td></tr>
  <tr><td>New Zealand</td><td>NZ</td><td class="c">21</td><td class="c">21</td><td class="c">2.5%</td></tr>
  <tr class="o"><td>Nigeria</td><td>NG</td><td class="c">22</td><td class="c">114</td><td class="c">2.6%</td></tr>
  <tr><td>Russia</td><td>RU</td><td class="c">22</td><td class="c">33</td><td class="c">2.6%</td></tr>
  <tr class="o"><td>United Kingdom</td><td>GB</td><td class="c">145</td><td class="c">147</td><td class="c">17.4%</td></tr>
  <tr><td>United States</td><td>US</td><td class="c">308</td><td class="c">321</td><td class="c">37.1%</td></tr>
  </table>
  <div class="info" style="top:424px;">Showing 1 to 10 of 10 entries</div>
  <div class="pag" style="left:349.6px;top:417.6px;width:260px;">
   <a style="left:0;width:52.8px;">First</a><a style="left:51.8px;width:75.7px;">Previous</a><a class="act" style="left:126.5px;width:33px;">1</a><a style="left:158.5px;width:52.5px;">Next</a><a style="left:210px;width:50px;">Last</a>
  </div>
 </div>
</div>

<!-- IP box -->
<div class="abs box" style="left:904.5px;top:1128px;width:629.5px;height:303.5px;">
 <div class="bh"><svg width="18" height="15" viewBox="0 0 18 15" style="top:12.5px;left:10.5px"><rect x="1" y="1" width="16" height="13" rx="1.2" fill="none" stroke="#333" stroke-width="1.7"/><rect x="1" y="1" width="16" height="3" fill="#333"/><path d="M6.4 3.5V13.5M11.6 3.5V13.5" stroke="#333" stroke-width="1.5"/></svg><div class="t" style="letter-spacing:-0.23px">IP Class Distribution of Unique Clicks (Over 1)</div></div>
 <div class="abs" style="left:10px;top:53px;width:609.5px;height:80px;">
  <div class="btn" style="left:0;width:53.5px;">Copy</div>
  <div class="btn" style="left:60px;width:52px;">Excel</div>
  <div class="btn" style="left:119px;width:46px;">CSV</div>
  <div class="btn" style="left:173px;width:46px;">PDF</div>
  <div class="sel" style="top:37px;"><span>10</span><b><svg width="15" height="27" viewBox="0 0 15 27" style="position:absolute;left:0;top:0"><path d="M4.3 11L7.5 14L10.7 11" fill="none" stroke="#555" stroke-width="1.1"/></svg></b></div>
  <div class="srch" style="left:391px;top:4px;">Search:</div>
  <div class="inp" style="left:441px;top:0;"></div>
 </div>
 <div class="bb" style="top:131.2px;">
  <table class="tb"><colgroup><col style="width:325.2px"><col></colgroup>
  <tr><th style="padding-right:30px">IP Class<svg class="sico" width="16" height="16" viewBox="0 0 16 16" style="right:7px;top:8.5px"><g fill="#333" opacity="0.85"><path d="M2.8 0.5h2.2v10.5h2.3l-3.4 4.5-3.4-4.5h2.3z"/><rect x="8.5" y="1" width="2.6" height="2.2"/><rect x="8.5" y="5.2" width="4" height="2.2"/><rect x="8.5" y="9.2" width="5.5" height="2.2"/><rect x="8.5" y="13" width="7" height="2.2"/></g></svg></th><th class="c" style="padding-right:30px">Count<svg class="sico" width="16" height="16" viewBox="0 0 16 16" style="right:7px;top:8.5px"><g fill="#333" opacity="0.3"><path d="M3.2 0.5h2.2v10.5h2.3l-3.4 4.5-3.4-4.5h2.3z"/><path d="M10.6 15.5h2.2V5h2.3l-3.4-4.5L8.3 5h2.3z"/></g></svg></th></tr>
  <tr class="o"><td>144.55.78</td><td class="c">21</td></tr>
  <tr><td>172.2.3</td><td class="c">4</td></tr>
  </table>
  <div class="info" style="top:128px;">Showing 1 to 2 of 2 entries</div>
  <div class="pag" style="left:349.6px;top:121.5px;width:260px;">
   <a style="left:0;width:52.8px;">First</a><a style="left:51.8px;width:75.7px;">Previous</a><a class="act" style="left:126.5px;width:33px;">1</a><a style="left:158.5px;width:52.5px;">Next</a><a style="left:210px;width:50px;">Last</a>
  </div>
 </div>
</div>

<div class="abs foot"><div class="ft"><a style="letter-spacing:-0.25px">My Click Boss Pro™</a> <b>Copyright © 2018 by <a>Rob Whisonant</a>.</b> All rights reserved.</div></div>
</div></body></html>
